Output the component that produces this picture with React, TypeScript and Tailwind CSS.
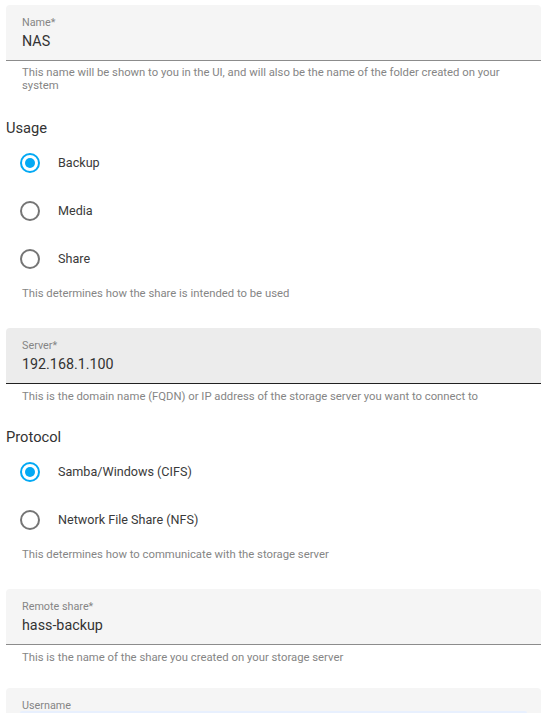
import React from 'react';

type FieldProps = {
  label: string;
  value?: string;
  hover?: boolean;
  autofill?: boolean;
};

function TextField({ label, value, hover, autofill }: FieldProps) {
  return (
    <div
      className={
        'h-[56px] rounded-t-[4px] border-b px-4 ' +
        (hover ? 'bg-[#ececec] border-[#212121]' : 'bg-[#f5f5f5] border-[#8c8c8c]')
      }
    >
      <div className="pt-[11px] text-[10.8px] leading-[14px] text-[#858585]">{label}</div>
      {autofill ? (
        <div className="-mx-[2px] -mt-[2px] h-[30px] rounded-[2px] bg-[#e8f0fe]" />
      ) : (
        <div className="pt-[1px] text-[14.3px] leading-[20px] text-[#333333]">{value}</div>
      )}
    </div>
  );
}

function Helper({ children }: { children: React.ReactNode }) {
  return <div className="px-4 text-[11.3px] leading-[13px] text-[#858585]">{children}</div>;
}

function Radio({ label, checked }: { label: string; checked?: boolean }) {
  return (
    <div className="flex h-[48px] items-center">
      <div className="flex w-[48px] justify-center">
        <div
          className={
            'flex h-[20px] w-[20px] items-center justify-center rounded-full border-2 ' +
            (checked ? 'border-[#03a9f4]' : 'border-[#757575]')
          }
        >
          {checked && <div className="h-[10px] w-[10px] rounded-full bg-[#03a9f4]" />}
        </div>
      </div>
      <span className="pl-[4px] text-[12.6px] text-[#3a3a3a]">{label}</span>
    </div>
  );
}

export default function App() {
  return (
    <div
      className="h-[713px] overflow-hidden bg-white pl-[6px] pr-[7px] pt-[5px]"
      style={{ fontFamily: 'Roboto, "Liberation Sans", sans-serif' }}
    >
      <TextField label="Name*" value="NAS" />
      <div className="pt-[5px]">
        <Helper>
          This name will be shown to you in the UI, and will also be the name of the folder created on your
          system
        </Helper>
      </div>

      <div className="mt-[26px] mb-[1px] text-[14.7px] leading-[20px] text-[#333333]">Usage</div>
      <div>
        <Radio label="Backup" checked />
        <Radio label="Media" />
        <Radio label="Share" />
      </div>
      <div className="pt-[4px]">
        <Helper>This determines how the share is intended to be used</Helper>
      </div>

      <div className="mt-[28px]">
        <TextField label="Server*" value="192.168.1.100" hover />
      </div>
      <div className="pt-[6px]">
        <Helper>This is the domain name (FQDN) or IP address of the storage server you want to connect to</Helper>
      </div>

      <div className="mt-[24px] mb-[1px] text-[14.7px] leading-[20px] text-[#333333]">Protocol</div>
      <div>
        <Radio label="Samba/Windows (CIFS)" checked />
        <Radio label="Network File Share (NFS)" />
      </div>
      <div className="pt-[4px]">
        <Helper>This determines how to communicate with the storage server</Helper>
      </div>

      <div className="mt-[28px]">
        <TextField label="Remote share*" value="hass-backup" />
      </div>
      <div className="pt-[6px]">
        <Helper>This is the name of the share you created on your storage server</Helper>
      </div>

      <div className="mt-[24px]">
        <TextField label="Username" autofill />
      </div>
    </div>
  );
}
